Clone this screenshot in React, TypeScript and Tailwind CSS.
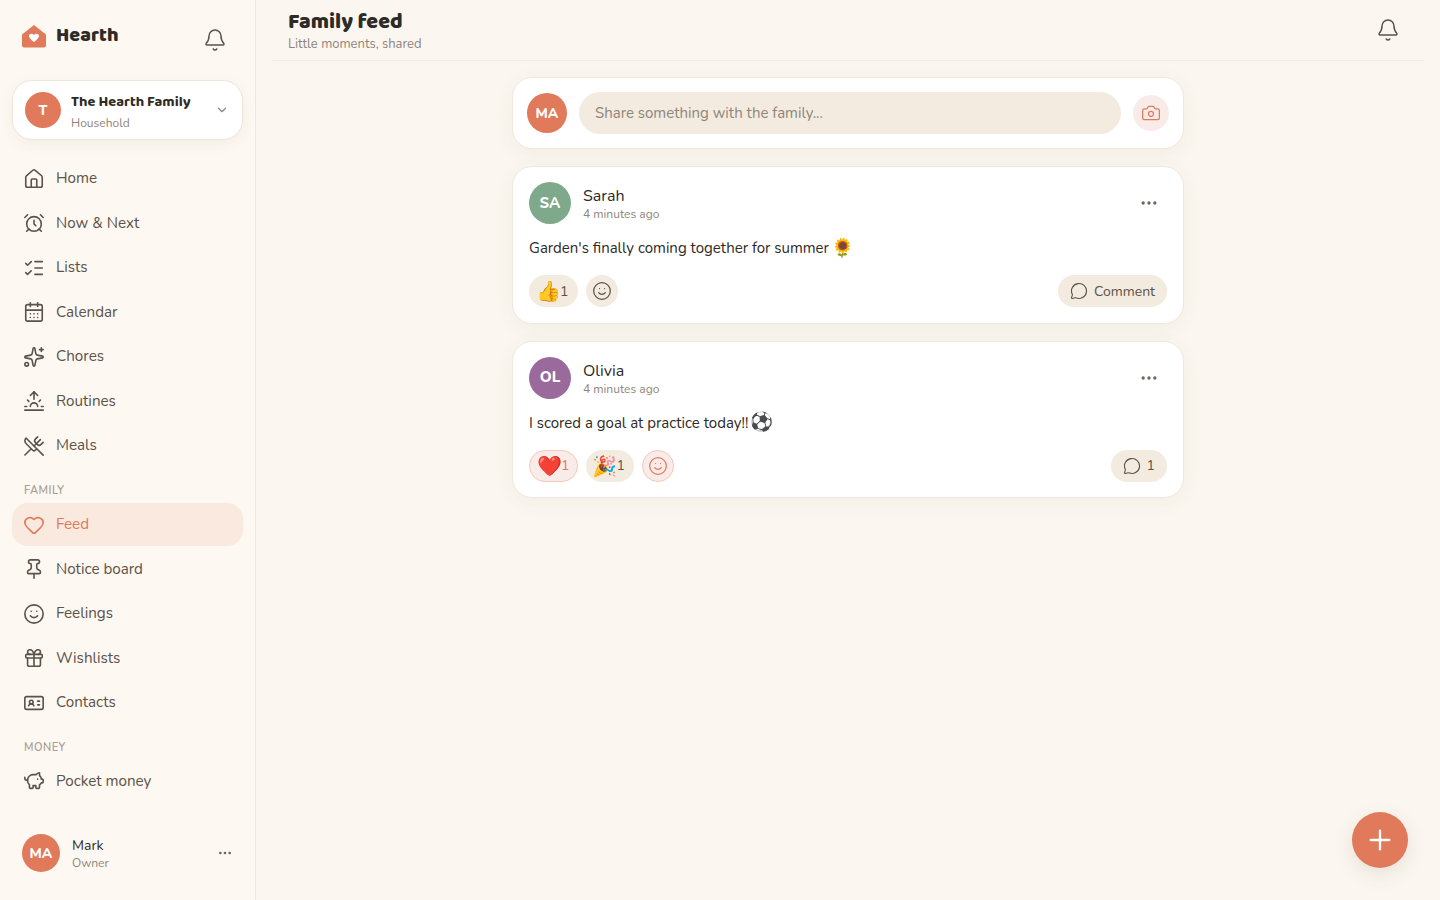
import {
  AlarmClock,
  Bell,
  CalendarDays,
  Camera,
  ChevronDown,
  Ellipsis,
  Gift,
  Heart,
  House,
  IdCard,
  ListChecks,
  MessageCircle,
  PiggyBank,
  Pin,
  Plus,
  Smile,
  Sparkles,
  Sunrise,
  UtensilsCrossed,
} from "lucide-react";

const body = "font-['Nunito','Noto_Sans','Open_Sans',sans-serif]";
const heading = "font-['Baloo_2','Lato','Noto_Sans',sans-serif]";

const topNav = [
  { label: "Home", icon: House },
  { label: "Now & Next", icon: AlarmClock },
  { label: "Lists", icon: ListChecks },
  { label: "Calendar", icon: CalendarDays },
  { label: "Chores", icon: Sparkles },
  { label: "Routines", icon: Sunrise },
  { label: "Meals", icon: UtensilsCrossed },
];

const familyNav = [
  { label: "Feed", icon: Heart, active: true },
  { label: "Notice board", icon: Pin },
  { label: "Feelings", icon: Smile },
  { label: "Wishlists", icon: Gift },
  { label: "Contacts", icon: IdCard },
];

const NavItem = ({ label, icon: Icon, active }: { label: string; icon: typeof House; active?: boolean }) => (
  <a
    className={`flex h-[42.5px] items-center gap-[11px] rounded-[16px] px-[11px] text-[15.2px] ${
      active ? "bg-[#f9e9df] text-[#e07a5a]" : "text-[#5c5249]"
    }`}
  >
    <Icon size={22} strokeWidth={1.75} />
    <span>{label}</span>
  </a>
);

const Avatar = ({ text, color, size }: { text: string; color: string; size: string }) => (
  <div className={`flex shrink-0 items-center justify-center rounded-full font-extrabold text-white ${color} ${size}`}>
    {text}
  </div>
);

const Emoji = ({ children, size }: { children: string; size: string }) => (
  <span className={`font-['Noto_Color_Emoji','Apple_Color_Emoji',sans-serif] leading-none ${size}`}>{children}</span>
);

const Post = ({
  initials,
  color,
  name,
  text,
  emoji,
  reactions,
  footer,
}: {
  initials: string;
  color: string;
  name: string;
  text: string;
  emoji: string;
  reactions: React.ReactNode;
  footer: React.ReactNode;
}) => (
  <div className="rounded-[20px] border border-[#f0e8dc] bg-white px-[16px] pb-[15.5px] pt-[15px] shadow-[0_4px_20px_rgba(80,60,40,0.06)]">
    <div className="flex items-center gap-[12px]">
      <Avatar text={initials} color={color} size="h-[42px] w-[42px] text-[15px]" />
      <div className="flex-1 pt-[2px]">
        <div className="text-[16px] leading-[20px] text-[#2e2a26]">{name}</div>
        <div className="text-[12px] leading-[16px] text-[#8f857a]">4 minutes ago</div>
      </div>
      <Ellipsis size={20} className="mr-[8px] text-[#6f655b]" />
    </div>
    <p className="mt-[12px] flex items-center gap-[2.5px] text-[15px] leading-[24px] text-[#2e2a26]">
      {text} <Emoji size="text-[18.5px]">{emoji}</Emoji>
    </p>
    <div className="mt-[15px] flex h-[32px] items-center justify-between">
      <div className="flex items-center gap-[8px]">{reactions}</div>
      {footer}
    </div>
  </div>
);

const Pill = ({ emoji, red }: { emoji: string; red?: boolean }) => (
  <div
    className={`flex h-[32px] w-[48.5px] items-center rounded-full pl-[7px] text-[14px] ${
      red ? "border border-[#f3c9bb] bg-[#f9ece8] text-[#e07a5a]" : "bg-[#f3ebdf] text-[#5c5249]"
    }`}
  >
    <Emoji size="-mr-[1px] text-[20px]">{emoji}</Emoji>1
  </div>
);

export default function App() {
  return (
    <div className={`flex h-[900px] w-[1440px] overflow-hidden bg-[#fbf7f0] ${body}`}>
      <aside className="flex h-full w-[256px] shrink-0 flex-col border-r border-[#efe8de] bg-[#fdf8f2]">
        <div className="flex h-[80px] items-start justify-between pl-[22px] pr-[28px] pt-[24px]">
          <div className="flex h-[24px] items-center gap-[10px]">
            <svg width="24" height="24" viewBox="0 0 24 24">
              <path
                d="M12 1 L24 10.5 V21.5 a2 2 0 0 1 -2 2 H2 a2 2 0 0 1 -2 -2 V10.5 Z"
                fill="#e07a5a"
              />
              <path
                d="M12 18 C8 15 7 13.2 7 11.8 C7 9.4 10.4 8.8 12 11 C13.6 8.8 17 9.4 17 11.8 C17 13.2 16 15 12 18 Z"
                fill="#fff"
              />
            </svg>
            <span className={`text-[19.8px] font-extrabold leading-[24px] text-[#2e2a26] ${heading}`}>Hearth</span>
          </div>
          <Bell size={24} strokeWidth={1.5} className="mt-[3.5px] text-[#5c5249]" />
        </div>

        <div className="mx-[12px] flex h-[60px] w-[231px] items-center rounded-[20px] border border-[#efe6da] bg-white pl-[12px] pr-[14px] shadow-[0_4px_14px_rgba(80,60,40,0.06)]">
          <Avatar text="T" color="bg-[#e07a5a]" size="h-[36px] w-[36px] text-[14px]" />
          <div className="ml-[10px] flex-1 pt-[4px]">
            <div className={`text-[14.7px] font-bold leading-[21px] text-[#2e2a26] ${heading}`}>The Hearth Family</div>
            <div className="text-[12px] leading-[20px] text-[#8f857a]">Household</div>
          </div>
          <ChevronDown size={14} className="relative left-[1px] text-[#8f857a]" />
        </div>

        <nav className="mt-[17.5px] flex flex-col gap-[2px] px-[12px]">
          {topNav.map((item) => (
            <NavItem key={item.label} {...item} />
          ))}
          <div className="mb-[2.75px] mt-[13.5px] px-[12px] text-[11px] font-semibold leading-[16px] tracking-[0.5px] text-[#a89e93]">
            FAMILY
          </div>
          {familyNav.map((item) => (
            <NavItem key={item.label} {...item} />
          ))}
          <div className="mb-[2.5px] mt-[13.75px] px-[12px] text-[11px] font-semibold leading-[16px] tracking-[0.5px] text-[#a89e93]">
            MONEY
          </div>
          <NavItem label="Pocket money" icon={PiggyBank} />
        </nav>

        <div className="mb-[28px] mt-auto flex h-[38px] items-center pl-[22px] pr-[22px]">
          <Avatar text="MA" color="bg-[#e07a5a]" size="h-[38px] w-[38px] text-[14px]" />
          <div className="ml-[12px] flex-1 pt-[3px]">
            <div className="text-[14px] leading-[18px] text-[#2e2a26]">Mark</div>
            <div className="text-[12px] leading-[17px] text-[#8f857a]">Owner</div>
          </div>
          <Ellipsis size={16} className="text-[#6f655b]" />
        </div>
      </aside>

      <main className="relative min-w-0 flex-1 px-[16px]">
        <header className="flex h-[61px] items-center justify-between border-b border-[#f3ece3] pr-[24px]">
          <div className="pl-[16px]">
            <h1 className={`pt-[3px] text-[21.6px] font-extrabold leading-[25px] text-[#2e2a26] ${heading}`}>Family feed</h1>
            <p className="text-[13px] leading-[18px] text-[#8f857a]">Little moments, shared</p>
          </div>
          <Bell size={24} strokeWidth={1.5} className="text-[#5c5249]" />
        </header>

        <div className="mx-auto mt-[16px] flex w-[672px] flex-col gap-[17px]">
          <div className="flex h-[72px] items-center rounded-[20px] border border-[#f0e8dc] bg-white pl-[14px] pr-[14px] shadow-[0_4px_20px_rgba(80,60,40,0.06)]">
            <Avatar text="MA" color="bg-[#e07a5a]" size="h-[40px] w-[40px] text-[14px]" />
            <div className="ml-[12px] flex h-[42px] flex-1 items-center rounded-full bg-[#f3ebdf] px-[16px] text-[15px] text-[#8f857a]">
              Share something with the family...
            </div>
            <div className="ml-[12px] flex h-[36px] w-[36px] items-center justify-center rounded-full bg-[#f9ece8] text-[#e07a5a]">
              <Camera size={20} strokeWidth={1.5} />
            </div>
          </div>

          <Post
            initials="SA"
            color="bg-[#7ea98a]"
            name="Sarah"
            text="Garden's finally coming together for summer"
            emoji="🌻"
            reactions={
              <>
                <Pill emoji="👍" />
                <div className="flex h-[32px] w-[32px] items-center justify-center rounded-full bg-[#f3ebdf] text-[#5c5249]">
                  <Smile size={20} strokeWidth={1.5} />
                </div>
              </>
            }
            footer={
              <div className="flex h-[32px] items-center gap-[6px] rounded-full bg-[#f3ebdf] px-[12px] text-[14px] text-[#5c5249]">
                <MessageCircle size={18} strokeWidth={1.5} />
                Comment
              </div>
            }
          />

          <Post
            initials="OL"
            color="bg-[#9a6a9c]"
            name="Olivia"
            text="I scored a goal at practice today!!"
            emoji="⚽"
            reactions={
              <>
                <Pill emoji="❤️" red />
                <Pill emoji="🎉" />
                <div className="flex h-[32px] w-[32px] items-center justify-center rounded-full border border-[#f3c9bb] bg-[#f9ece8] text-[#e07a5a]">
                  <Smile size={20} strokeWidth={1.5} />
                </div>
              </>
            }
            footer={
              <div className="flex h-[32px] items-center gap-[6px] rounded-full bg-[#f3ebdf] px-[12px] text-[14px] text-[#5c5249]">
                <MessageCircle size={18} strokeWidth={1.5} />1
              </div>
            }
          />
        </div>

        <button className="absolute bottom-[32px] right-[32px] flex h-[56px] w-[56px] items-center justify-center rounded-full bg-[#e07a5a] text-white shadow-[0_6px_20px_rgba(80,60,40,0.12)]">
          <Plus size={32} strokeWidth={1.75} />
        </button>
      </main>
    </div>
  );
}
